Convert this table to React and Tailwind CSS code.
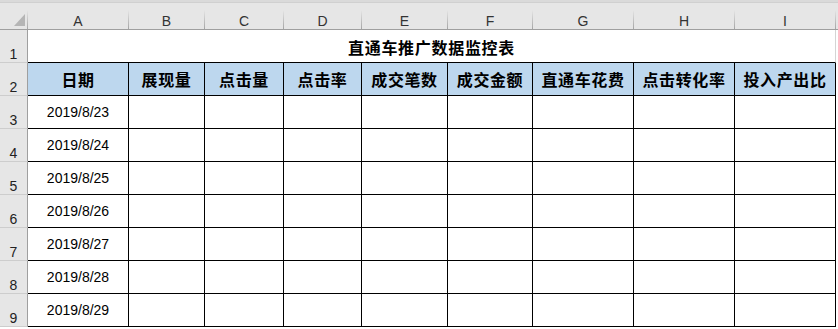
const columns = [
  { key: 'A', w: 'w-[101px]', title: '日期' },
  { key: 'B', w: 'w-[76px]', title: '展现量' },
  { key: 'C', w: 'w-[79px]', title: '点击量' },
  { key: 'D', w: 'w-[78px]', title: '点击率' },
  { key: 'E', w: 'w-[86px]', title: '成交笔数' },
  { key: 'F', w: 'w-[85px]', title: '成交金额' },
  { key: 'G', w: 'w-[101px]', title: '直通车花费' },
  { key: 'H', w: 'w-[101px]', title: '点击转化率' },
  { key: 'I', w: 'w-[101px]', title: '投入产出比' },
];

const dates = ['2019/8/23', '2019/8/24', '2019/8/25', '2019/8/26', '2019/8/27', '2019/8/28', '2019/8/29'];

const cjk = "font-['Noto_Sans_CJK_SC',sans-serif]";
const latin = "font-['Liberation_Sans',Arial,sans-serif]";

// gray row number on the left edge of the sheet
const RowHead = ({ n }) => (
  <div className={`w-[28px] h-full shrink-0 box-border border-r border-b border-r-[#9f9f9f] border-b-[#cdcdcd] bg-[#e6e6e6] flex items-end justify-center pb-[1px] text-[14px] leading-[14px] text-[#222] ${latin}`}>
    {n}
  </div>
);

const App = () => {
  return (
    <div className="w-[838px] h-[329px] overflow-hidden bg-white">
      {/* strip under the formula bar */}
      <div className="h-[3px] bg-[#dadada] border-b border-[#d0d0d0]" />

      {/* column letters */}
      <div className="flex h-[27px] bg-[#e6e6e6] border-b border-[#9f9f9f]">
        <div className="w-[28px] shrink-0 relative flex">
          <svg width="11" height="12" viewBox="0 0 11 12" className="absolute left-[14px] top-[11px]">
            <polygon points="11,0 11,12 0,12" fill="#b5b5b5" />
          </svg>
          <div className="ml-auto mt-auto w-px h-[19px] bg-gradient-to-b from-[#e6e6e6] to-[#a5a5a5]" />
        </div>
        {columns.map((c) => (
          <div key={c.key} className={`${c.w} shrink-0 flex`}>
            <div className={`flex-1 flex items-end justify-center pb-[1px] text-[14px] leading-[14px] text-[#333] ${latin}`}>
              {c.key}
            </div>
            <div className="mt-auto w-px h-[19px] bg-gradient-to-b from-[#e6e6e6] to-[#a5a5a5]" />
          </div>
        ))}
      </div>

      {/* row 1: merged title */}
      <div className="flex h-[33px]">
        <RowHead n={1} />
        <div className={`w-[808px] shrink-0 box-border border-b border-r border-b-black border-r-[#d4d4d4] flex items-center justify-center pt-[1px] text-[16px] font-bold tracking-[0.7px] text-black ${cjk}`}>
          直通车推广数据监控表
        </div>
      </div>

      {/* row 2: headings */}
      <div className="flex h-[33px]">
        <RowHead n={2} />
        {columns.map((c) => (
          <div
            key={c.key}
            className={`${c.w} shrink-0 box-border border-r border-b border-black bg-[#bdd7ee] flex items-center justify-center text-[16px] font-bold tracking-[0.6px] text-black ${cjk}`}
          >
            {c.title}
          </div>
        ))}
      </div>

      {/* rows 3-9: daily data */}
      {dates.map((d, i) => (
        <div key={d} className="flex h-[33px]">
          <RowHead n={i + 3} />
          {columns.map((c, j) => (
            <div
              key={c.key}
              className={`${c.w} shrink-0 box-border border-r border-b border-black flex items-center justify-center text-[14px] text-black ${latin}`}
            >
              {j === 0 ? d : ''}
            </div>
          ))}
        </div>
      ))}
    </div>
  );
};

export default App;
